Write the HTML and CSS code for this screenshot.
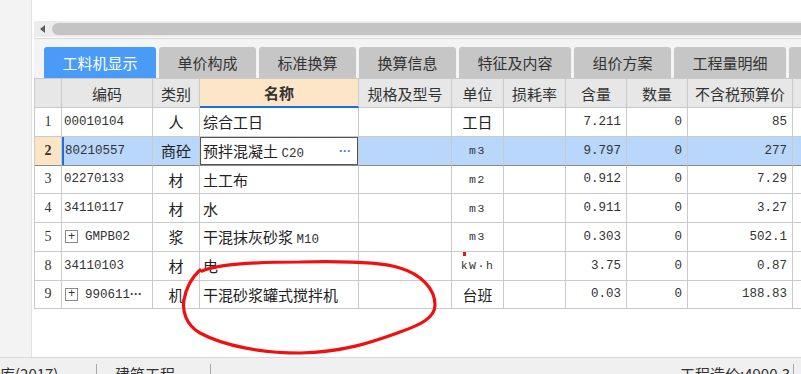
FILE: index.html
```html
<!DOCTYPE html>
<html lang="zh-CN">
<head>
<meta charset="utf-8">
<title>工料机显示</title>
<link rel="stylesheet" href="styles.css">
</head>
<body>
<div class="app">
  <div class="main">
    <aside class="side"></aside>
    <section class="content">
      <div class="topblank"></div>
      <div class="hscroll"><span class="arrow"></span><span class="thumb"></span></div>
      <nav class="tabs">
        <div class="tab wide active">工料机显示</div>
        <div class="tab">单价构成</div>
        <div class="tab">标准换算</div>
        <div class="tab">换算信息</div>
        <div class="tab wide">特征及内容</div>
        <div class="tab">组价方案</div>
        <div class="tab wide">工程量明细</div>
        <div class="tab"></div>
      </nav>
      <div class="grid">
        <div class="row head">
          <div class="c"></div>
          <div class="c ctr">编码</div>
          <div class="c ctr">类别</div>
          <div class="c ctr namehead">名称</div>
          <div class="c ctr">规格及型号</div>
          <div class="c ctr">单位</div>
          <div class="c ctr">损耗率</div>
          <div class="c ctr">含量</div>
          <div class="c ctr">数量</div>
          <div class="c ctr">不含税预算价</div>
          <div class="c"></div>
        </div>
        <div class="row">
          <div class="c num">1</div>
          <div class="c mono">00010104</div>
          <div class="c ctr">人</div>
          <div class="c">综合工日</div>
          <div class="c"></div>
          <div class="c ctr">工日</div>
          <div class="c"></div>
          <div class="c mono r">7.211</div>
          <div class="c mono r">0</div>
          <div class="c mono r">85</div>
          <div class="c"></div>
        </div>
        <div class="row sel">
          <div class="c num cur">2</div>
          <div class="c mono focus">80210557</div>
          <div class="c ctr">商砼</div>
          <div class="c edit"><span>预拌混凝土 <span class="mono">C20</span></span><span class="dots">···</span></div>
          <div class="c"></div>
          <div class="c ctr unit">m3</div>
          <div class="c"></div>
          <div class="c mono r">9.797</div>
          <div class="c mono r">0</div>
          <div class="c mono r">277</div>
          <div class="c"></div>
        </div>
        <div class="row">
          <div class="c num">3</div>
          <div class="c mono">02270133</div>
          <div class="c ctr">材</div>
          <div class="c">土工布</div>
          <div class="c"></div>
          <div class="c ctr unit">m2</div>
          <div class="c"></div>
          <div class="c mono r">0.912</div>
          <div class="c mono r">0</div>
          <div class="c mono r">7.29</div>
          <div class="c"></div>
        </div>
        <div class="row">
          <div class="c num">4</div>
          <div class="c mono">34110117</div>
          <div class="c ctr">材</div>
          <div class="c">水</div>
          <div class="c"></div>
          <div class="c ctr unit">m3</div>
          <div class="c"></div>
          <div class="c mono r">0.911</div>
          <div class="c mono r">0</div>
          <div class="c mono r">3.27</div>
          <div class="c"></div>
        </div>
        <div class="row">
          <div class="c num">5</div>
          <div class="c mono"><span class="plus">+</span><span>GMPB02</span></div>
          <div class="c ctr">浆</div>
          <div class="c"><span>干混抹灰砂浆 <span class="mono">M10</span></span></div>
          <div class="c"></div>
          <div class="c ctr unit">m3</div>
          <div class="c"></div>
          <div class="c mono r">0.303</div>
          <div class="c mono r">0</div>
          <div class="c mono r">502.1</div>
          <div class="c"></div>
        </div>
        <div class="row">
          <div class="c num">8</div>
          <div class="c mono">34110103</div>
          <div class="c ctr">材</div>
          <div class="c">电</div>
          <div class="c"></div>
          <div class="c ctr unit">kW·h</div>
          <div class="c"></div>
          <div class="c mono r">3.75</div>
          <div class="c mono r">0</div>
          <div class="c mono r">0.87</div>
          <div class="c"></div>
        </div>
        <div class="row">
          <div class="c num">9</div>
          <div class="c mono"><span class="plus">+</span><span>990611<span class="ell">···</span></span></div>
          <div class="c ctr">机</div>
          <div class="c">干混砂浆罐式搅拌机</div>
          <div class="c"></div>
          <div class="c ctr">台班</div>
          <div class="c"></div>
          <div class="c mono r">0.03</div>
          <div class="c mono r">0</div>
          <div class="c mono r">188.83</div>
          <div class="c"></div>
        </div>
      </div>
    </section>
  </div>
  <footer class="status">
    <div class="seg first">库(2017)</div>
    <div class="seg second">建筑工程</div>
    <div class="seg last">工程造价:4900.3</div>
  </footer>
  <svg class="mark" width="801" height="374" viewBox="0 0 801 374">
    <path d="M202,271 C218,264 255,262 300,262 C345,261 382,262 400,268 C420,274 435,288 435,305 C435,318 420,325 400,332 C372,342 345,352 300,353 C262,353 224,346 200,333 C186,325 182,311 184,300 C186,288 190,279 200,270" fill="none" stroke="#f01010" stroke-width="3.2" stroke-linecap="round" stroke-linejoin="round"/>
    <rect x="463" y="252" width="3" height="4" fill="#f01010"/>
  </svg>
</div>
</body>
</html>
```
FILE: styles.css
```css
html, body {
  margin: 0;
  padding: 0;
}
body {
  width: 801px;
  height: 374px;
  overflow: hidden;
  background: #fff;
  font-family: "Noto Sans CJK SC", "Noto Sans", sans-serif;
  color: #222;
}
.app {
  position: relative;
  width: 801px;
  height: 374px;
  overflow: hidden;
}
.main {
  display: flex;
  height: 357px;
}
.side {
  width: 31px;
  flex: none;
  background: #f3f3f3;
  border-right: 1px solid #e2e2e2;
}
.content {
  flex: 1;
  min-width: 0;
  padding-left: 2px;
  overflow: hidden;
  background: #fff;
}
.topblank {
  height: 21px;
}
.hscroll {
  height: 16px;
  background: #ececec;
  display: flex;
  align-items: center;
}
.arrow {
  width: 0;
  height: 0;
  margin-left: 6px;
  border-right: 5px solid #5c5c5c;
  border-top: 4px solid transparent;
  border-bottom: 4px solid transparent;
}
.thumb {
  flex: 1;
  height: 12px;
  margin-left: 7px;
  background: #c4c4c4;
  border-radius: 6px 0 0 6px;
}
.tabs {
  margin-top: 1px;
  border-top: 1px solid #d8d8d8;
  background: #f4f4f4;
  padding: 8px 0 0 10px;
  display: flex;
  gap: 3px;
  white-space: nowrap;
}
.tab {
  flex: none;
  width: 97px;
  height: 31px;
  line-height: 31px;
  text-align: center;
  font-size: 15px;
  color: #333;
  background: #c6c6c6;
  border-radius: 3px 3px 0 0;
}
.tab.wide {
  width: 112px;
}
.tab.active {
  background: #4a9bf8;
  color: #fff;
}
.grid {
  width: 900px;
  border-top: 1px solid #c9c9c9;
  border-left: 1px solid #c9c9c9;
}
.row {
  display: grid;
  grid-template-columns: 27px 91px 47px 159px 93px 52px 62px 61px 61px 105px 80px;
  height: 28.75px;
}
.row.head {
  height: 29px;
  background: #e7e7e7;
}
.c {
  box-sizing: border-box;
  border-right: 1px solid #cacaca;
  border-bottom: 1px solid #cacaca;
  padding: 0 3px;
  font-size: 15px;
  display: flex;
  align-items: center;
  white-space: pre;
  overflow: hidden;
  color: #222;
}
.head .c {
  color: #333;
}
.ctr {
  justify-content: center;
}
.namehead {
  background: #fde6c8;
  font-weight: bold;
  border-bottom: 2px solid #1b6fe0;
}
.mono {
  font-family: "Liberation Mono", "DejaVu Sans Mono", monospace;
  font-size: 12.5px;
  color: #333;
}
.c.mono {
  padding-left: 2px;
}
.r {
  justify-content: flex-end;
  padding-right: 5px;
}
.num {
  justify-content: center;
  font-family: "Liberation Serif", serif;
  font-size: 14px;
  color: #333;
}
.unit {
  font-family: "Liberation Mono", monospace;
  font-size: 11.5px;
  letter-spacing: 1.5px;
  color: #333;
}
.sel {
  background: #b8d7fa;
}
.sel .c {
  border-bottom-color: #8c8c8c;
}
.sel .cur {
  background: #fde4c4;
  font-weight: bold;
}
.sel .focus {
  box-shadow: inset 2px 0 0 #1b6fe0;
  padding-left: 3px;
}
.sel .edit {
  background: #fff;
  box-shadow: inset 0 0 0 1px #555;
  justify-content: space-between;
  padding-right: 7px;
}
.dots {
  color: #3b7fd8;
  font-family: "Liberation Sans", sans-serif;
  font-size: 12px;
  font-weight: bold;
  letter-spacing: 0;
}
.ell {
  font-family: "Liberation Sans", sans-serif;
  font-size: 12px;
  font-weight: bold;
}
.plus {
  box-sizing: border-box;
  width: 13px;
  height: 13px;
  border: 1px solid #8a8a8a;
  margin: 0 7px 0 1px;
  display: inline-flex;
  align-items: center;
  justify-content: center;
  font-size: 12px;
  line-height: 1;
  color: #333;
}
.status {
  height: 40px;
  box-sizing: border-box;
  background: #f0f0f0;
  border-top: 1px solid #d9d9d9;
  display: flex;
  align-items: flex-start;
  padding-top: 6px;
}
.seg {
  height: 20px;
  line-height: 20px;
  font-size: 15px;
  color: #333;
  border-right: 1px solid #a8a8a8;
  white-space: nowrap;
  overflow: hidden;
  box-sizing: border-box;
}
.seg.first {
  width: 97px;
}
.seg.second {
  width: 114px;
  padding-left: 18px;
}
.seg.last {
  margin-left: auto;
  margin-right: 7px;
  width: 114px;
}
.mark {
  position: absolute;
  left: 0;
  top: 0;
  pointer-events: none;
}
```
